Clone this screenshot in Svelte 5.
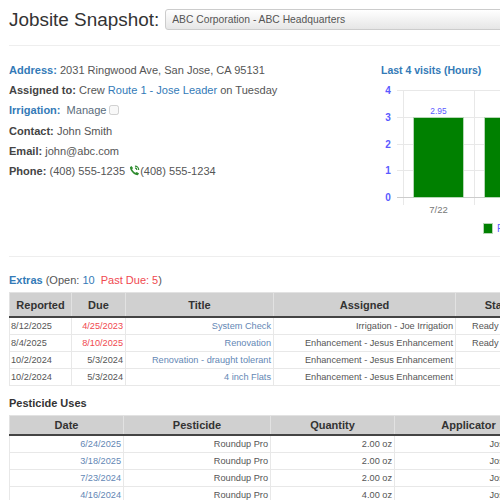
<script>
  const extras = [
    { reported: '8/12/2025', due: '4/25/2023', late: true, title: 'System Check', assigned: 'Irrigation - Joe Irrigation', status: 'Ready to Schedule' },
    { reported: '8/4/2025', due: '8/10/2025', late: true, title: 'Renovation', assigned: 'Enhancement - Jesus Enhancement', status: 'Ready to Schedule' },
    { reported: '10/2/2024', due: '5/3/2024', late: false, title: 'Renovation - draught tolerant', assigned: 'Enhancement - Jesus Enhancement', status: '' },
    { reported: '10/2/2024', due: '5/3/2024', late: false, title: '4 inch Flats', assigned: 'Enhancement - Jesus Enhancement', status: '' }
  ];

  const uses = [
    { date: '6/24/2025', quantity: '2.00 oz' },
    { date: '3/18/2025', quantity: '2.00 oz' },
    { date: '7/23/2024', quantity: '2.00 oz' },
    { date: '4/16/2024', quantity: '4.00 oz' }
  ];

  const ticks = [
    { label: '4', y: 10 },
    { label: '3', y: 37 },
    { label: '2', y: 64 },
    { label: '1', y: 90 },
    { label: '0', y: 117 }
  ];
</script>

<div class="page">
  <header class="top">
    <h3>Jobsite Snapshot:</h3>
    <select class="site-select">
      <option>ABC Corporation - ABC Headquarters</option>
    </select>
  </header>
  <hr class="rule-top" />

  <section class="summary">
    <div class="details">
      <p><a href="#address" class="label">Address:</a> 2031 Ringwood Ave, San Jose, CA 95131</p>
      <p><b>Assigned to:</b> Crew <a href="#route">Route 1 - Jose Leader</a> on Tuesday</p>
      <p class="irrigation">
        <a href="#irrigation" class="label">Irrigation:</a>
        <span class="manage">Manage</span>
        <input type="checkbox" disabled />
      </p>
      <p><b>Contact:</b> John Smith</p>
      <p><b>Email:</b> john@abc.com</p>
      <p>
        <b>Phone:</b> (408) 555-1235
        <svg class="phone" viewBox="0 0 12 12" width="11" height="11">
          <path d="M2.6 1 4.4 3.4 3.4 4.6C4 6 5.6 7.8 7.2 8.5L8.5 7.5 11 9.4 9.6 11.2C5.6 11.2 1 6.2 1 2.4Z" fill="#2e8b2e" />
          <path d="M6.5 1.2A4.2 4.2 0 0 1 10.6 5.4M6.5 3.2A2.2 2.2 0 0 1 8.6 5.4" fill="none" stroke="#2e8b2e" stroke-width="1.3" />
        </svg>(408) 555-1234
      </p>
    </div>

    <div class="chart">
      <a href="#visits" class="label chart-title">Last 4 visits (Hours)</a>
      <svg class="plot" width="125" height="160" viewBox="0 0 125 160">
        {#each ticks as t}
          <line x1="22" x2="125" y1={t.y + 0.5} y2={t.y + 0.5} class="grid" />
          <text x="13" y={t.y + 3.5} class="tick">{t.label}</text>
        {/each}
        <line x1="28.5" x2="28.5" y1="10" y2="125" class="grid" />
        <line x1="99.5" x2="99.5" y1="10" y2="125" class="grid" />
        <line x1="22" x2="125" y1="117.5" y2="117.5" class="axis" />
        <rect x="38.5" y="37.5" width="50" height="80" class="bar" />
        <rect x="109.5" y="37.5" width="50" height="80" class="bar" />
        <text x="63.5" y="33.5" class="value">2.95</text>
        <text x="63.5" y="133" class="date">7/22</text>
        <rect x="108.5" y="143.5" width="9" height="10" class="bar" />
        <text x="122" y="152" class="legend">Previous</text>
      </svg>
    </div>
  </section>
  <hr class="rule-mid" />

  <h4 class="extras-title">
    <a href="#extras" class="label">Extras</a>
    (Open: <a href="#open">10</a>&nbsp; <span class="late">Past Due: 5</span>)
  </h4>
  <table class="extras">
    <colgroup>
      <col style="width: 62px" /><col style="width: 54px" /><col style="width: 148px" /><col style="width: 182px" /><col style="width: 92px" />
    </colgroup>
    <thead>
      <tr><th>Reported</th><th>Due</th><th>Title</th><th>Assigned</th><th>Status</th></tr>
    </thead>
    <tbody>
      {#each extras as row}
        <tr>
          <td class="left">{row.reported}</td>
          <td class:late={row.late}>{row.due}</td>
          <td><a href="#title">{row.title}</a></td>
          <td>{row.assigned}</td>
          <td class="status">{row.status}</td>
        </tr>
      {/each}
    </tbody>
  </table>

  <h4 class="uses-title">Pesticide Uses</h4>
  <table class="uses">
    <colgroup>
      <col style="width: 114px" /><col style="width: 147px" /><col style="width: 124px" /><col style="width: 148px" />
    </colgroup>
    <thead>
      <tr><th>Date</th><th>Pesticide</th><th>Quantity</th><th>Applicator</th></tr>
    </thead>
    <tbody>
      {#each uses as use}
        <tr>
          <td><a href="#date">{use.date}</a></td>
          <td>Roundup Pro</td>
          <td>{use.quantity}</td>
          <td>Jose Leader</td>
        </tr>
      {/each}
    </tbody>
  </table>
</div>

<style>
  :global(body) {
    margin: 0;
    overflow: hidden;
  }

  .page {
    width: 500px;
    height: 500px;
    overflow: hidden;
    padding-left: 9px;
    box-sizing: border-box;
    font-family: "Liberation Sans", Arial, sans-serif;
    font-size: 10.5px;
    color: #555;
  }

  a {
    color: #6487b5;
    text-decoration: none;
  }

  .top {
    display: flex;
    align-items: center;
    gap: 6px;
    height: 37px;
    padding-top: 1px;
    width: 600px;
  }

  h3 {
    margin: 0;
    font-size: 18.9px;
    font-weight: normal;
    color: #333;
    white-space: nowrap;
  }

  .site-select {
    appearance: none;
    width: 420px;
    height: 21px;
    padding: 0 6px;
    border: 1px solid #ccc;
    border-radius: 3px;
    background: linear-gradient(#fff, #e6e6e6);
    font: inherit;
    font-size: 10.3px;
    color: #555;
  }

  hr {
    margin: 0;
    border: 0;
    border-top: 1px solid #eee;
    width: 600px;
  }

  .rule-top {
    margin-top: 7px;
  }

  .summary {
    display: flex;
    height: 210px;
    width: 600px;
  }

  .details {
    width: 366px;
    padding-top: 18px;
    flex: none;
  }

  .details p {
    margin: 0 0 7.2px;
    height: 13px;
    line-height: 13px;
    white-space: nowrap;
    font-size: 11.05px;
  }

  .details b {
    color: #444;
  }

  .label {
    color: #337ab7;
    font-weight: bold;
  }

  .details a:not(.label) {
    color: #337ab7;
  }

  .irrigation {
    display: flex;
    align-items: center;
    gap: 6px;
  }

  .manage {
    color: #5a6b7b;
  }

  .irrigation input {
    margin: -2px 0 0 -3px;
    width: 10px;
    height: 10px;
  }

  .phone {
    vertical-align: -1px;
    margin-left: 1px;
  }

  .chart {
    padding-top: 18px;
    width: 125px;
  }

  .chart-title {
    display: block;
    margin-left: 6px;
    height: 13px;
    line-height: 13px;
    font-size: 10.5px;
    white-space: nowrap;
  }

  .plot {
    display: block;
    margin-top: 3px;
    overflow: hidden;
    font-family: "Liberation Sans", Arial, sans-serif;
  }

  .grid {
    stroke: #e8e8e8;
    stroke-width: 1;
  }

  .axis {
    stroke: #ccc;
    stroke-width: 1;
  }

  .tick {
    fill: #5a5aff;
    font-size: 10px;
    font-weight: bold;
    text-anchor: middle;
  }

  .bar {
    fill: #008000;
    stroke: #b5d6b5;
    stroke-width: 1;
  }

  .value {
    fill: #5a5aff;
    font-size: 8.4px;
    text-anchor: middle;
  }

  .date {
    fill: #777;
    font-size: 9.5px;
    text-anchor: middle;
  }

  .legend {
    fill: #5a5aff;
    font-size: 10px;
  }

  .rule-mid {
    margin-bottom: 0;
  }

  h4 {
    margin: 0;
    font-size: 11px;
    line-height: 13px;
    white-space: nowrap;
  }

  .extras-title {
    font-weight: normal;
    margin-top: 17px;
    margin-bottom: 5px;
  }

  .extras-title a:not(.label) {
    color: #337ab7;
  }

  .late {
    color: #f0494f;
  }

  .uses-title {
    margin-top: 11px;
    margin-bottom: 5px;
    color: #333;
  }

  table {
    border-collapse: collapse;
    table-layout: fixed;
    font-size: 9.2px;
  }

  .extras {
    width: 538px;
  }

  .uses {
    width: 533px;
  }

  th {
    background: #d0d0d0;
    color: #333;
    font-size: 11px;
    height: 23px;
    padding: 0;
    border: 1px solid #e2e2e2;
    border-bottom: 2px solid #444;
    white-space: nowrap;
  }

  .uses th {
    height: 18px;
  }

  td {
    height: 16px;
    padding: 0 2px;
    text-align: right;
    border: 1px solid #e8e8e8;
    line-height: 12px;
    white-space: nowrap;
    overflow: hidden;
  }

  td.left {
    text-align: left;
    padding-left: 1px;
  }

  td.status {
    padding-right: 0;
    padding-left: 16px;
    text-align: left;
  }

  td a {
    color: #6487b5;
  }
</style>
